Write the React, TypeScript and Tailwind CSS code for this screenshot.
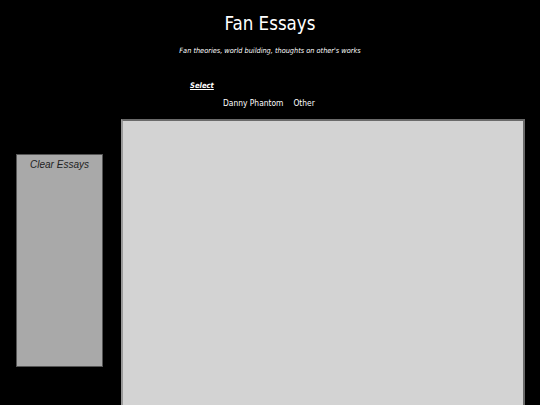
export default function App() {
    return (
        <div className="h-[405px] w-[540px] overflow-hidden bg-black text-white font-['DejaVu_Sans_Condensed','DejaVu_Sans',sans-serif]">
            {/* Header */}
            <header className="flex flex-col items-center">
                <h1 className="mt-[11px] text-[18.6px] leading-[26px]">Fan Essays</h1>
                <p className="mt-[9px] text-[7.3px] leading-[10px] italic">
                    Fan theories, world building, thoughts on other's works
                </p>
            </header>

            {/* Nav */}
            <nav className="mt-[25px]">
                <div className="pl-[190px] text-[7.6px] leading-[10px] italic font-bold underline">Select</div>
                <div className="mt-[6px] flex gap-[10px] pl-[223px] text-[8.4px] leading-[12px]">
                    <span>Danny Phantom</span>
                    <span>Other</span>
                </div>
            </nav>

            {/* Body */}
            <div className="mt-[10px] flex items-start">
                <aside className="ml-[16px] mt-[35px] h-[213px] w-[87px] border border-[#555] bg-[#a9a9a9] text-center">
                    <div className="mt-[3px] font-['Liberation_Sans',sans-serif] text-[10px] leading-[14px] italic text-[#222]">Clear Essays</div>
                </aside>
                <main className="ml-[18px] h-[300px] w-[404px] border-2 border-t-[#6a6a6a] border-r-[#6a6a6a] border-l-[#9a9a9a] border-b-[#9a9a9a] bg-[#d3d3d3]" />
            </div>
        </div>
    );
}
